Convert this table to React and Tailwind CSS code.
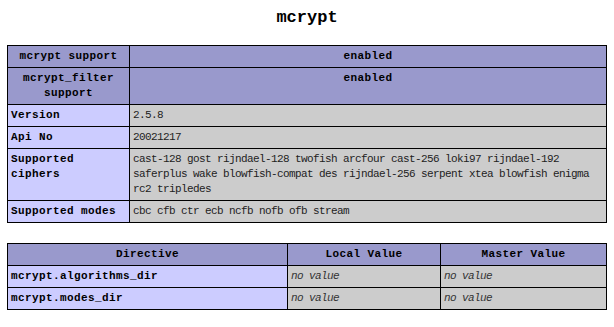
const mono = { fontFamily: '"Liberation Mono", "DejaVu Sans Mono", monospace' };

const rows = [
  ['Version', '2.5.8'],
  ['Api No', '20021217'],
  [
    'Supported ciphers',
    'cast-128 gost rijndael-128 twofish arcfour cast-256 loki97 rijndael-192 saferplus wake blowfish-compat des rijndael-256 serpent xtea blowfish enigma rc2 tripledes',
  ],
  ['Supported modes', 'cbc cfb ctr ecb ncfb nofb ofb stream'],
];

const directives = ['mcrypt.algorithms_dir', 'mcrypt.modes_dir'];

const cell = 'border border-black px-[3px] py-[3px] leading-[15px] align-baseline';
const h = `${cell} bg-[#9999cc] font-bold text-center text-[11px] tracking-[0.4px] text-black`;
const e = `${cell} bg-[#ccccff] font-bold text-left text-[11px] tracking-[0.4px] text-black`;
const v = `${cell} bg-[#cccccc] text-left text-[11px] tracking-[-0.6px] text-[#222]`;

export default function App() {
  return (
    <div className="w-[614px] h-[327px] bg-white overflow-hidden" style={mono}>
      <h2 className="text-center text-[17px] font-bold leading-[20px] pt-[8px] h-[45px] text-black">
        mcrypt
      </h2>

      <table className="mx-auto w-[600px] border-collapse table-fixed">
        <colgroup>
          <col className="w-[122px]" />
          <col />
        </colgroup>
        <tbody>
          <tr>
            <th className={h}>mcrypt support</th>
            <th className={h}>enabled</th>
          </tr>
          <tr>
            <th className={h}>mcrypt_filter support</th>
            <th className={h}>enabled</th>
          </tr>
          {rows.map(([k, val]) => (
            <tr key={k}>
              <td className={e}>{k}</td>
              <td className={v}>{val}</td>
            </tr>
          ))}
        </tbody>
      </table>

      <table className="mx-auto mt-[20px] w-[600px] border-collapse table-fixed">
        <colgroup>
          <col className="w-[280px]" />
          <col className="w-[153px]" />
          <col />
        </colgroup>
        <tbody>
          <tr>
            <th className={h}>Directive</th>
            <th className={h}>Local Value</th>
            <th className={h}>Master Value</th>
          </tr>
          {directives.map((d) => (
            <tr key={d}>
              <td className={e}>{d}</td>
              <td className={v}>
                <i className="text-[#333]">no value</i>
              </td>
              <td className={v}>
                <i className="text-[#333]">no value</i>
              </td>
            </tr>
          ))}
        </tbody>
      </table>
    </div>
  );
}
